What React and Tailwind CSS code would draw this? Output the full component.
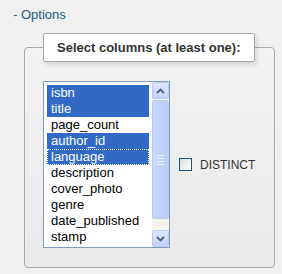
import React from 'react';

// Column picker: "Options" panel with a multi-select list and DISTINCT checkbox
const columns = [
  { name: 'isbn', selected: true },
  { name: 'title', selected: true },
  { name: 'page_count', selected: false },
  { name: 'author_id', selected: true },
  { name: 'language', selected: true, focused: true },
  { name: 'description', selected: false },
  { name: 'cover_photo', selected: false },
  { name: 'genre', selected: false },
  { name: 'date_published', selected: false },
  { name: 'stamp', selected: false },
];

const ScrollButton = ({ dir }) => (
  <div className="w-[17px] h-[17px] border border-[#b8cbf2] rounded-[2px] bg-gradient-to-b from-[#dde7fd] to-[#c2d3fa] flex items-center justify-center">
    <svg width="9" height="6" viewBox="0 0 9 6">
      <path
        d={dir === 'up' ? 'M1 5 L4.5 1.5 L8 5' : 'M1 1 L4.5 4.5 L8 1'}
        stroke="#4d6185"
        strokeWidth="1.8"
        fill="none"
      />
    </svg>
  </div>
);

const ColumnList = () => (
  <div className="w-[127px] h-[167px] border border-[#7f9db9] bg-white flex">
    <div className="flex-1 pt-[3px] pl-[3px] pr-[3px] overflow-hidden">
      {columns.map((col) => (
        <div
          key={col.name}
          className={`h-[16px] leading-[16px] pl-[4px] text-[13px] ${
            col.selected ? 'bg-[#316ac5] text-white' : 'text-black'
          } ${col.focused ? 'outline outline-1 outline-dotted outline-offset-[-1px] outline-white' : ''}`}
        >
          {col.name}
        </div>
      ))}
    </div>
    <div className="w-[17px] flex flex-col bg-[#f4f2ea]">
      <ScrollButton dir="up" />
      <div className="h-[119px] mt-[1px] border border-[#b8cbf2] rounded-[2px] bg-gradient-to-r from-[#c8d8fc] to-[#b8cdf9] flex flex-col items-center justify-center gap-[2px]">
        <div className="w-[7px] h-[1px] bg-[#eef3fe]" />
        <div className="w-[7px] h-[1px] bg-[#eef3fe]" />
        <div className="w-[7px] h-[1px] bg-[#eef3fe]" />
        <div className="w-[7px] h-[1px] bg-[#eef3fe]" />
      </div>
      <div className="flex-1" />
      <ScrollButton dir="down" />
    </div>
  </div>
);

export default function App() {
  return (
    <div className="w-[282px] h-[274px] bg-[#f0f0f0] font-['Liberation_Sans',Arial,sans-serif] pt-[7px] pl-[13px]">
      <a className="block text-[13px] leading-[16px] text-[#235a81]">- Options</a>
      <fieldset className="mt-[10px] ml-[11px] w-[251px] h-[235px] border border-[#aaaaaa] rounded-[4px] bg-gradient-to-b from-[#f2f2f2] to-[#eaeaea] px-[18px]">
        <legend className="h-[29px] px-[13px] bg-white border border-[#aaaaaa] rounded-[2px] shadow-[2px_3px_4px_rgba(0,0,0,0.12)] text-[13px] font-bold text-[#333333] leading-[27px]">
          Select columns (at least one):
        </legend>
        <div className="mt-[19px] flex items-center">
          <ColumnList />
          <label className="ml-[9px] flex items-center">
            <span className="w-[13px] h-[13px] border border-[#1c5180] bg-gradient-to-br from-[#dcdcd7] to-[#ffffff]" />
            <span className="ml-[8px] text-[12px] text-[#333333]">DISTINCT</span>
          </label>
        </div>
      </fieldset>
    </div>
  );
}
